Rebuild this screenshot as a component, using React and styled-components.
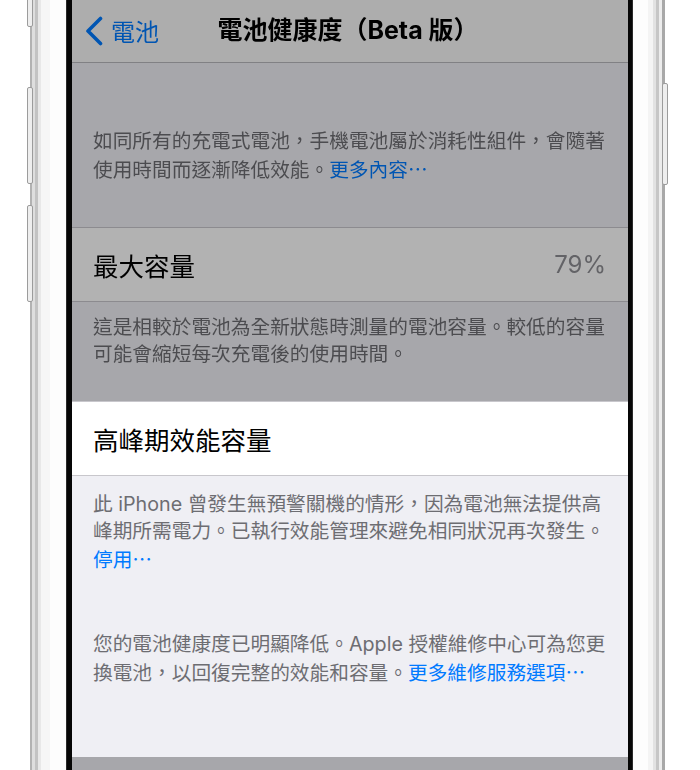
import React from "react";
import styled, { createGlobalStyle, css } from "styled-components";

const GlobalStyle = createGlobalStyle`
  html, body {
    margin: 0;
    padding: 0;
    background: #ffffff;
  }
  body {
    font-family: "Inter", "Noto Sans CJK TC", sans-serif;
    -webkit-font-smoothing: antialiased;
  }
`;

const cjk = `"Noto Sans CJK TC", "Noto Sans CJK JP", sans-serif`;

const leftRim = `linear-gradient(to right,
  #b2b2b2 0 2px, #dedede 2px 5px, #c3c3c3 5px 8px, #e8e8e8 8px 11px,
  #f6f6f6 11px 20px, #fdfdfd 20px 36px, #2a2a2a 36px 37px, #060606 37px 42px)`;

const rightRim = `linear-gradient(to right,
  #060606 0 4px, #2a2a2a 4px 5px, #fdfdfd 5px 20px, #f4f4f4 20px 25px,
  #e2e2e2 25px 28px, #c6c6c6 28px 31px, #ececec 31px 34px, #a8a8a8 34px 37px, #ffffff 37px 40px)`;

const Page = styled.div`
  height: 770px;
  overflow: hidden;
  display: flex;
  padding-left: 30px;
  background: #ffffff;
`;

const Phone = styled.div`
  position: relative;
  display: flex;
  width: 638px;
  height: 770px;
`;

const Rim = styled.div`
  flex: none;
  width: ${(p) => (p.$side === "left" ? 42 : 40)}px;
  background: ${(p) => (p.$side === "left" ? leftRim : rightRim)};
`;

const SideButton = styled.div`
  position: absolute;
  top: ${(p) => p.$top}px;
  height: ${(p) => p.$height}px;
  width: 4px;
  ${(p) => (p.$side === "left" ? "left: -3px;" : "right: 0px;")}
  background: #eeeeee;
  border: 1px solid #9c9c9c;
  border-radius: 2px;
`;

const Screen = styled.div`
  flex: 1;
  display: flex;
  flex-direction: column;
  background: #efeff4;
  overflow: hidden;
`;

const Section = styled.section`
  display: flex;
  flex-direction: column;
  flex: ${(p) => (p.$fill ? 1 : "none")};
  background: #efeff4;
  ${(p) =>
    p.$dim &&
    css`
      filter: brightness(0.7);
    `}
`;

const NavBar = styled.header`
  flex: none;
  height: 62px;
  display: grid;
  grid-template-columns: 1fr auto 1fr;
  align-items: center;
  padding: 0 17px 0 13px;
  background: #f7f7f7;
  border-bottom: 1px solid #b8b8bd;
`;

const BackButton = styled.div`
  display: flex;
  align-items: center;
  gap: 8px;
  color: #007aff;
  font-family: ${cjk};
  font-size: 24px;
  line-height: 30px;
`;

const Title = styled.h1`
  margin: 0 0 3px;
  font-size: 25px;
  font-weight: 700;
  line-height: 30px;
  color: #000000;
  white-space: nowrap;
`;

const Footer = styled.div`
  padding: ${(p) => p.$pad};
  padding-left: 21px;
  font-size: 19.7px;
  color: #6d6d72;
  white-space: nowrap;
`;

const Line = styled.span`
  display: block;
  height: 27px;
  line-height: 27px;
`;

const Link = styled.span`
  color: #007aff;
  font-family: ${cjk};
`;

const Row = styled.div`
  flex: none;
  height: 73px;
  display: flex;
  align-items: center;
  justify-content: space-between;
  padding: 0 22px 0 21px;
  background: #ffffff;
  border-top: 1px solid #c8c7cc;
  border-bottom: 1px solid #c8c7cc;
  font-family: ${cjk};
  font-size: 25.5px;
  line-height: 32px;
  color: #000000;
`;

const Value = styled.span`
  font-family: "Inter", sans-serif;
  font-size: 24px;
  color: #8e8e93;
`;

const Chevron = () => (
  <svg width="18" height="30" viewBox="0 0 18 30" aria-hidden="true">
    <polyline
      points="15.5,2.5 3,15 15.5,27.5"
      fill="none"
      stroke="#007aff"
      strokeWidth="3.6"
      strokeLinecap="round"
      strokeLinejoin="round"
    />
  </svg>
);

export default function App() {
  return (
    <>
      <GlobalStyle />
      <Page>
        <Phone>
          <SideButton $side="left" $top={-20} $height={45} />
          <SideButton $side="left" $top={87} $height={95} />
          <SideButton $side="left" $top={205} $height={95} />
          <SideButton $side="right" $top={83} $height={100} />
          <Rim $side="left" />
          <Screen>
            <Section $dim>
              <NavBar>
                <BackButton>
                  <Chevron />
                  電池
                </BackButton>
                <Title>電池健康度（Beta 版）</Title>
                <span />
              </NavBar>
              <Footer $pad="65px 0 45px">
                <Line>如同所有的充電式電池，手機電池屬於消耗性組件，會隨著</Line>
                <Line>
                  使用時間而逐漸降低效能。<Link>更多內容…</Link>
                </Line>
              </Footer>
              <Row>
                最大容量
                <Value>79%</Value>
              </Row>
              <Footer $pad="12px 0 33px">
                <Line>這是相較於電池為全新狀態時測量的電池容量。較低的容量</Line>
                <Line>可能會縮短每次充電後的使用時間。</Line>
              </Footer>
            </Section>
            <Section>
              <Row>高峰期效能容量</Row>
              <Footer $pad="15px 0 0">
                <Line>此 iPhone 曾發生無預警關機的情形，因為電池無法提供高</Line>
                <Line>峰期所需電力。已執行效能管理來避免相同狀況再次發生。</Line>
                <Line>
                  <Link>停用…</Link>
                </Line>
              </Footer>
              <Footer $pad="59px 0 72px">
                <Line>您的電池健康度已明顯降低。Apple 授權維修中心可為您更</Line>
                <Line>
                  換電池，以回復完整的效能和容量。<Link>更多維修服務選項…</Link>
                </Line>
              </Footer>
            </Section>
            <Section $dim $fill />
          </Screen>
          <Rim $side="right" />
        </Phone>
      </Page>
    </>
  );
}
